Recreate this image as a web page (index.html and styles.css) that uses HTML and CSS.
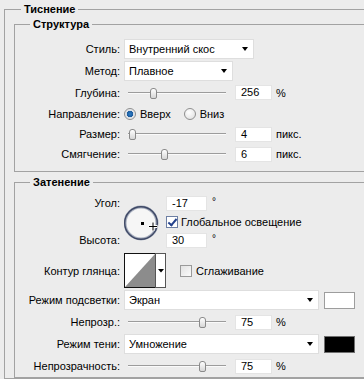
FILE: index.html
```html
<!DOCTYPE html>
<html lang="ru">
<head>
    <meta charset="UTF-8">
    <title>Тиснение</title>
    <link rel="stylesheet" href="styles.css">
</head>
<body>
    <fieldset class="group outer">
        <legend>Тиснение</legend>

        <fieldset class="group structure">
            <legend>Структура</legend>

            <div class="row sel">
                <span class="label">Стиль:</span>
                <div class="select w-style">Внутренний скос<i class="arrow"></i></div>
            </div>
            <div class="row sel">
                <span class="label">Метод:</span>
                <div class="select w-method">Плавное<i class="arrow"></i></div>
            </div>
            <div class="row mid">
                <span class="label">Глубина:</span>
                <div class="slider"><i class="thumb" style="left: 26px"></i></div>
                <div class="field">256</div>
                <span class="unit">%</span>
            </div>
            <div class="row mid">
                <span class="label">Направление:</span>
                <span class="radio on"></span><span class="opt">Вверх</span>
                <span class="radio"></span><span class="opt">Вниз</span>
            </div>
            <div class="row">
                <span class="label">Размер:</span>
                <div class="slider"><i class="thumb" style="left: 5px"></i></div>
                <div class="field">4</div>
                <span class="unit">пикс.</span>
            </div>
            <div class="row">
                <span class="label">Смягчение:</span>
                <div class="slider"><i class="thumb" style="left: 37px"></i></div>
                <div class="field">6</div>
                <span class="unit">пикс.</span>
            </div>
        </fieldset>

        <fieldset class="group shading">
            <legend>Затенение</legend>

            <div class="row angle">
                <div class="label pair">
                    <span>Угол:</span>
                    <span>Высота:</span>
                </div>
                <svg class="dial" width="40" height="36" viewBox="0 0 40 36">
                    <circle cx="17" cy="18" r="16" fill="#f6f6f6" stroke="#a6adbd" stroke-width="3"/>
                    <circle cx="17" cy="18" r="16.3" fill="none" stroke="#3e4865" stroke-width="1.4"/>
                    <rect x="17" y="17" width="3" height="3" fill="#000"/>
                    <path d="M29 17v9M24.5 21.5h9" stroke="#fff" stroke-width="3"/>
                    <path d="M29 17.5v8M25 21.5h8" stroke="#000" stroke-width="1"/>
                </svg>
                <div class="angle-fields">
                    <div class="line"><div class="field wide">-17</div><span class="deg">°</span></div>
                    <div class="line check-line"><span class="check on"></span>Глобальное освещение</div>
                    <div class="line"><div class="field wide">30</div><span class="deg">°</span></div>
                </div>
            </div>

            <div class="row contour-row">
                <span class="label">Контур глянца:</span>
                <svg class="contour" width="43" height="35" viewBox="0 0 43 35">
                    <rect x="0.5" y="0.5" width="31" height="34" fill="#fff" stroke="#111"/>
                    <polygon points="1,34 31,1 31,34" fill="#8c8c8c"/>
                    <rect x="31.5" y="0.5" width="10" height="34" fill="#fff" stroke="#555"/>
                    <polygon points="34,16 40,16 37,19.5" fill="#000"/>
                </svg>
                <span class="check"></span><span class="opt">Сглаживание</span>
            </div>

            <div class="row tall">
                <span class="label">Режим подсветки:</span>
                <div class="select w-mode">Экран<i class="arrow"></i></div>
                <span class="swatch light"></span>
            </div>
            <div class="row tall">
                <span class="label">Непрозр.:</span>
                <div class="slider"><i class="thumb" style="left: 75px"></i></div>
                <div class="field">75</div>
                <span class="unit">%</span>
            </div>
            <div class="row tall">
                <span class="label">Режим тени:</span>
                <div class="select w-mode">Умножение<i class="arrow"></i></div>
                <span class="swatch dark"></span>
            </div>
            <div class="row tall">
                <span class="label">Непрозрачность:</span>
                <div class="slider"><i class="thumb" style="left: 75px"></i></div>
                <div class="field">75</div>
                <span class="unit">%</span>
            </div>
        </fieldset>
    </fieldset>
</body>
</html>
```

FILE: styles.css
```css
html,
body {
    margin: 0;
    overflow: hidden;
    background: #ececec;
}
body {
    width: 364px;
    height: 379px;
    font-family: 'Liberation Sans', Arial, sans-serif;
    font-size: 11px;
    color: #000;
}
.group {
    margin: 0;
    padding: 0;
    min-width: 0;
    border: 1px solid #a2a2a2;
}
.group legend {
    padding: 0 3px;
    font-weight: bold;
    line-height: 14px;
}
.outer {
    width: 420px;
    margin: 2px 0 0 4px;
    padding: 0 0 0 9px;
    border-right: none;
}
.outer > legend {
    margin-left: 7px;
}
.structure,
.shading {
    border-right: none;
}
.structure > legend,
.shading > legend {
    margin-left: 15px;
}
.structure {
    margin-top: 1px;
    padding: 7px 0 7px 0;
}
.shading {
    margin-top: 3px;
    padding: 6px 0 0 0;
}

/* rows */
.row {
    display: flex;
    align-items: center;
    gap: 4px;
    height: 20px;
}
.row.sel {
    height: 22px;
}
.row.mid {
    height: 21px;
}
.row.tall {
    height: 22px;
}
.label {
    flex: none;
    width: 105px;
    text-align: right;
    white-space: nowrap;
}

/* controls */
.select {
    display: flex;
    align-items: center;
    justify-content: space-between;
    box-sizing: border-box;
    height: 20px;
    padding: 0 5px 0 4px;
    background: #fff;
    border: 1px solid #dedede;
}
.w-style { width: 130px; }
.w-method { width: 109px; }
.w-mode { width: 195px; }
.arrow {
    width: 0;
    height: 0;
    border-left: 3.5px solid transparent;
    border-right: 3.5px solid transparent;
    border-top: 4px solid #000;
}
.field {
    box-sizing: border-box;
    width: 37px;
    height: 15px;
    padding-left: 5px;
    line-height: 13px;
    background: #fff;
    border: 1px solid #e4e4e4;
}
.field.wide {
    width: 41px;
}
.deg {
    margin: -5px 0 0 5px;
    font-size: 10px;
}
.slider {
    position: relative;
    flex: none;
    width: 102px;
    height: 14px;
    margin-right: 5px;
}
.slider::before {
    content: "";
    position: absolute;
    left: 4px;
    right: 0;
    top: 6px;
    border-top: 1px solid #9c9c9c;
    border-bottom: 1px solid #fafafa;
}
.thumb {
    position: absolute;
    top: 2px;
    box-sizing: border-box;
    width: 7px;
    height: 11px;
    border: 1px solid #8a8a8a;
    border-radius: 3px 3px 2px 2px;
    background: linear-gradient(#ffffff, #d6d6d6);
}
.radio {
    flex: none;
    box-sizing: border-box;
    width: 12px;
    height: 12px;
    border: 1px solid #8f8f8f;
    border-radius: 50%;
    background: radial-gradient(circle at 40% 35%, #ffffff, #dcdcdc);
}
.radio.on {
    background: radial-gradient(circle at 50% 50%, #2f7fc9 0, #1b5a9c 3px, #d8dde4 3.5px, #f4f4f4 6px);
}
.opt {
    margin-right: 5px;
}
.row.mid .opt + .radio {
    margin-left: 4px;
}
.check {
    flex: none;
    box-sizing: border-box;
    width: 12px;
    height: 12px;
    border: 1px solid #9a9a9a;
    background: linear-gradient(135deg, #e2e2e2, #fbfbfb);
}
.check.on {
    position: relative;
    border-color: #6d7fa3;
    background: #fff;
}
.check.on::after {
    content: "";
    position: absolute;
    left: 3px;
    top: 0;
    width: 3px;
    height: 7px;
    border-right: 2px solid #23418c;
    border-bottom: 2px solid #23418c;
    transform: rotate(40deg);
}
.swatch {
    box-sizing: border-box;
    width: 31px;
    height: 17px;
    margin-left: 1px;
    border: 1px solid #9d9d9d;
}
.swatch.light {
    background: #fff;
}
.swatch.dark {
    background: #000;
    border-color: #707070;
}

/* angle block */
.row.angle {
    height: 54px;
    align-items: stretch;
    gap: 4px;
}
.pair {
    display: flex;
    flex-direction: column;
    justify-content: space-between;
    align-items: flex-end;
}
.pair span {
    line-height: 17px;
}
.dial {
    align-self: center;
    margin-top: 2px;
}
.angle-fields {
    display: flex;
    flex-direction: column;
    gap: 1px;
    margin-left: -2px;
}
.line {
    display: flex;
    align-items: center;
    height: 17px;
}
.check-line {
    height: 18px;
    gap: 3px;
}
.contour-row {
    height: 37px;
    margin-top: 3px;
}
.contour-row .check {
    margin-left: 9px;
}
```
